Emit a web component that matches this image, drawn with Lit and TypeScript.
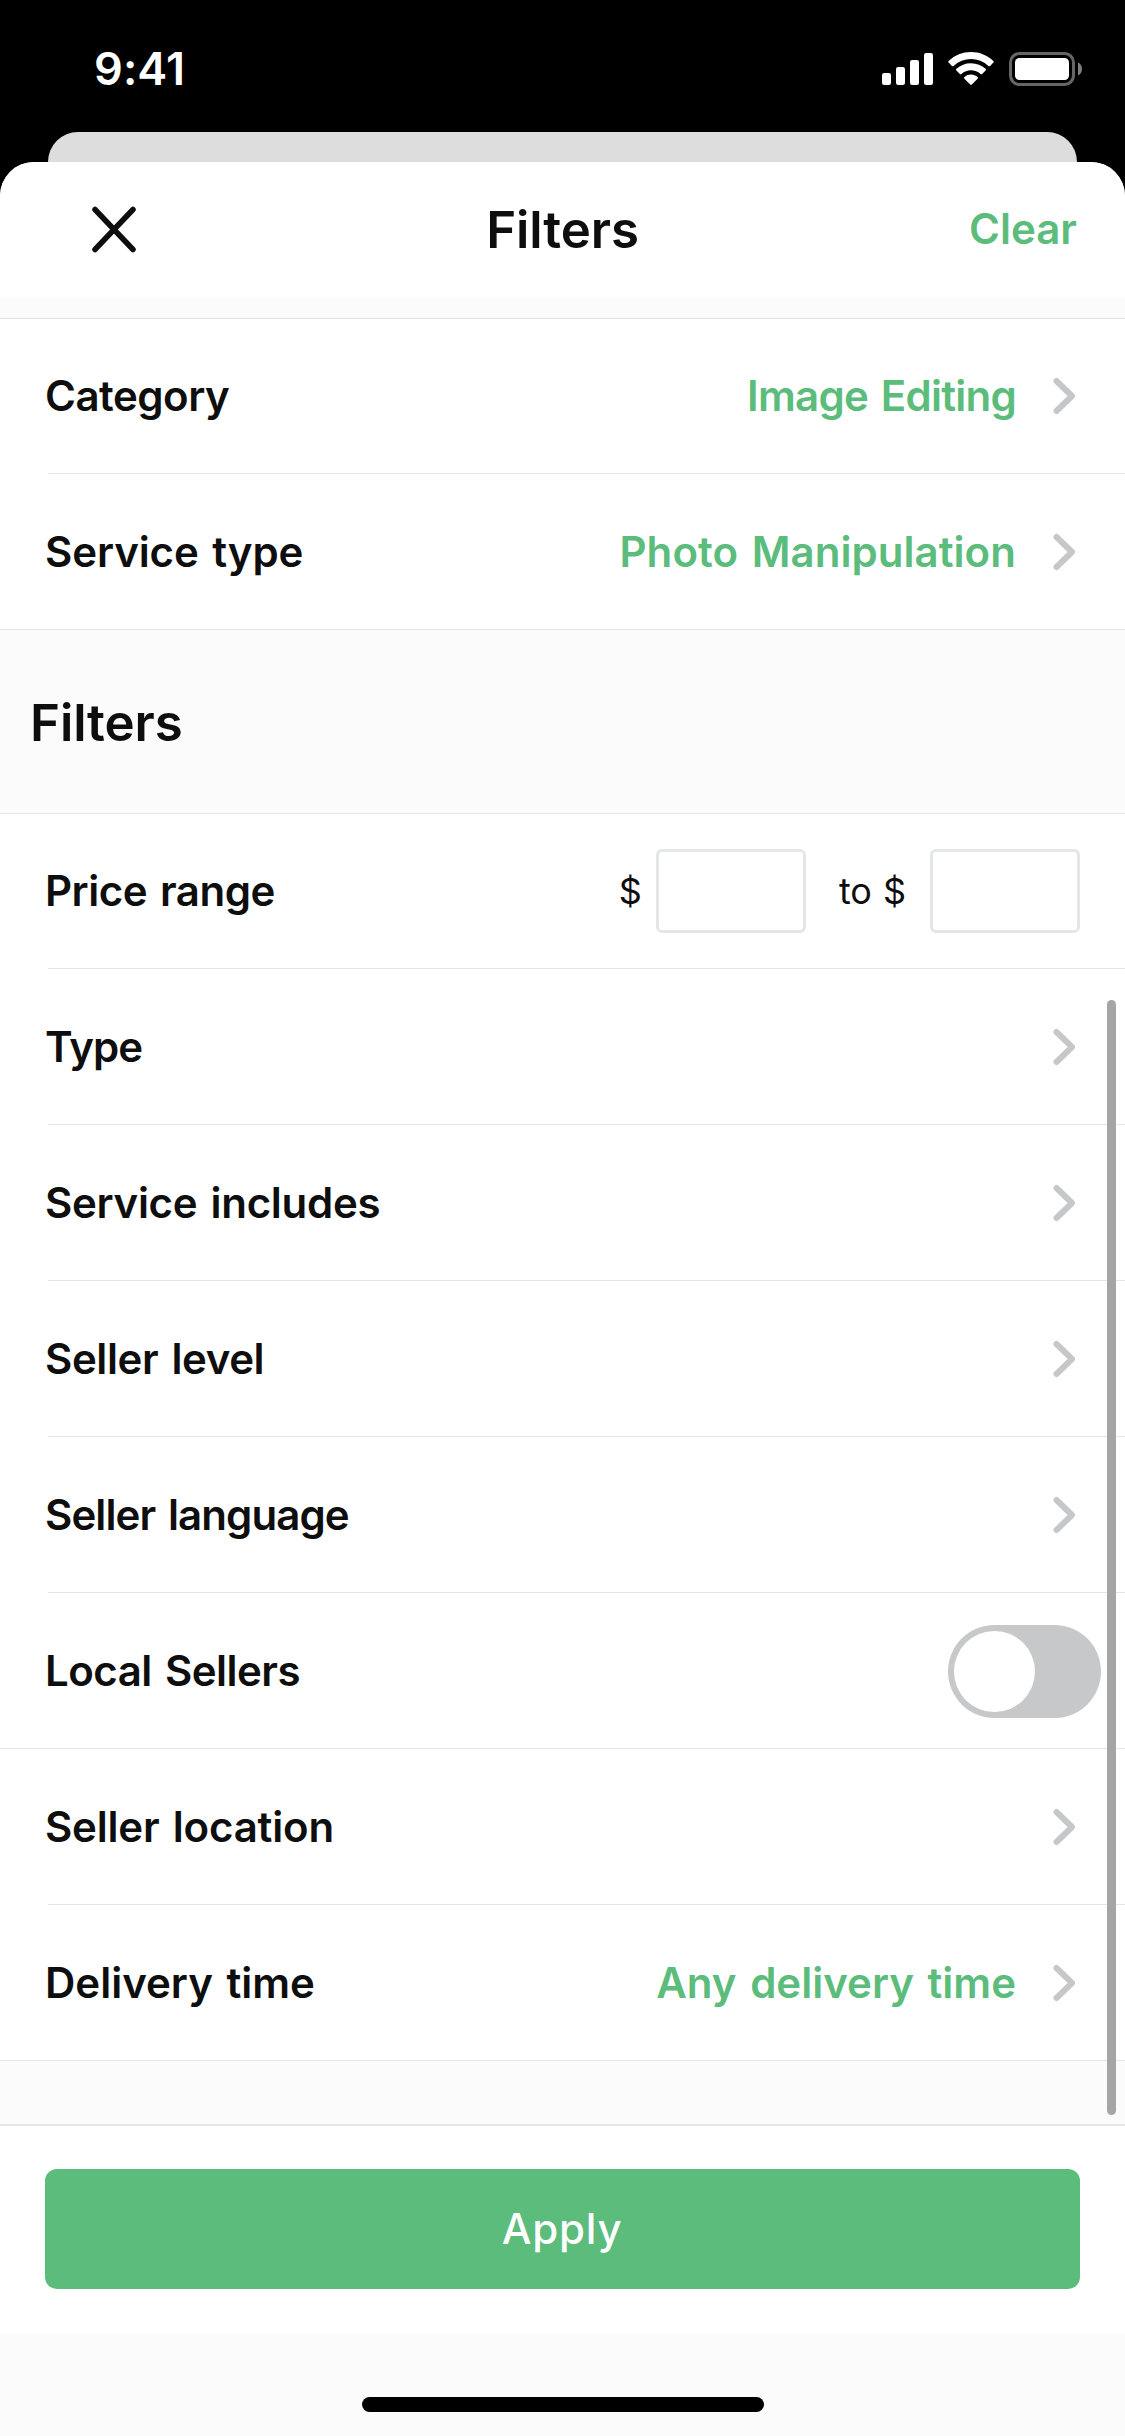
import { LitElement, html, css, nothing } from "lit";
import { customElement, property } from "lit/decorators.js";
import { classMap } from "lit/directives/class-map.js";
import { styleMap } from "lit/directives/style-map.js";

type Row = {
  label: string;
  kind: "link" | "price" | "toggle";
  value?: string;
  full?: boolean;
  /** Letter spacing of the label and of the value, in pixels. */
  tracking?: number;
  valueTracking?: number;
};

const SCOPE_ROWS: Row[] = [
  { label: "Category", kind: "link", value: "Image Editing", tracking: -0.5, valueTracking: -0.75 },
  { label: "Service type", kind: "link", value: "Photo Manipulation", full: true, tracking: -0.1, valueTracking: 0.05 },
];

const FILTER_ROWS: Row[] = [
  { label: "Price range", kind: "price", tracking: -0.5 },
  { label: "Type", kind: "link", tracking: -0.9 },
  { label: "Service includes", kind: "link", tracking: -0.3 },
  { label: "Seller level", kind: "link", tracking: -0.4 },
  { label: "Seller language", kind: "link", tracking: -0.9 },
  { label: "Local Sellers", kind: "toggle", full: true, tracking: -0.5 },
  { label: "Seller location", kind: "link", tracking: -0.2 },
  { label: "Delivery time", kind: "link", value: "Any delivery time", full: true, tracking: 0, valueTracking: 0 },
];

@customElement("status-bar")
class StatusBar extends LitElement {
  static styles = css`
    :host {
      display: flex;
      justify-content: space-between;
      align-items: flex-start;
      height: 132px;
      box-sizing: border-box;
      padding: 46px 43px 0 94px;
      background: #000;
      color: #fff;
    }
    .time {
      font-size: 45px;
      font-weight: 600;
      line-height: 46px;
      letter-spacing: 0.1px;
    }
    .icons {
      display: block;
      width: 200px;
      height: 34px;
      margin-top: 6px;
    }
  `;
  render() {
    return html`
      <span class="time">9:41</span>
      <svg class="icons" viewBox="882 52 200 34" fill="#fff">
        <rect x="882" y="73" width="9" height="12" rx="2.2" />
        <rect x="896" y="67" width="9" height="18" rx="2.2" />
        <rect x="910" y="60" width="9" height="25" rx="2.2" />
        <rect x="924" y="53" width="9" height="32" rx="2.2" />
        <path d="M971 52c8.700 0 16.600 3.400 22.400 8.900.5.5.5 1.200 0 1.700l-3.300 3.300c-.5.5-1.200.5-1.700 0a25.200 25.200 0 0 0-34.800 0c-.5.5-1.200.5-1.700 0l-3.300-3.300c-.5-.5-.5-1.200 0-1.700A32.400 32.400 0 0 1 971 52z" />
        <path d="M971 63.200c5.600 0 10.700 2.100 14.600 5.600.5.5.5 1.200 0 1.700l-3.500 3.500c-.5.400-1.100.4-1.600 0a14.100 14.100 0 0 0-19 0c-.5.4-1.100.4-1.600 0l-3.500-3.500c-.5-.5-.5-1.200 0-1.700A21.700 21.700 0 0 1 971 63.200z" />
        <path d="M971 74.600c2.500 0 4.800.9 6.600 2.400.5.4.5 1.200 0 1.700l-5.800 5.900c-.4.400-1.200.4-1.600 0l-5.800-5.900c-.5-.5-.5-1.300 0-1.700a10.300 10.300 0 0 1 6.600-2.400z" />
        <rect x="1010.500" y="53.500" width="63" height="31" rx="9" fill="none" stroke="#666" stroke-width="3" />
        <rect x="1015" y="58" width="54" height="22" rx="4.500" />
        <path d="M1078 62.500c2.400 1 4 3.500 4 6.500s-1.600 5.500-4 6.500z" fill="#808080" />
      </svg>
    `;
  }
}

@customElement("filter-row")
class FilterRow extends LitElement {
  @property({ attribute: false }) row!: Row;

  static styles = css`
    :host {
      display: block;
      background: #fff;
      padding-left: 48px;
    }
    :host([full]) {
      padding-left: 0;
    }
    .row {
      display: flex;
      align-items: center;
      justify-content: space-between;
      box-sizing: border-box;
      height: var(--row-height, 156px);
      padding-right: 45px;
      border-bottom: 1px solid #e4e5e6;
      font-size: 42px;
      font-weight: 600;
      line-height: 52px;
      word-spacing: 3px;
      color: #0e0e0f;
      white-space: nowrap;
    }
    .full {
      padding-left: 48px;
    }
    .toggle-row {
      padding-right: 24px;
    }
    .label {
      margin-left: -3px;
    }
    .end {
      display: flex;
      align-items: center;
    }
    .value {
      color: #5bbc7b;
      margin-right: 34px;
    }
    .chevron {
      display: block;
      width: 30px;
      height: 40px;
    }
    .price {
      font-size: 36px;
      font-weight: 400;
    }
    .field {
      width: 150px;
      height: 84px;
      box-sizing: border-box;
      border: 3px solid #e5e6e7;
      border-radius: 6px;
      margin-left: 14px;
    }
    .to {
      margin: 0 11px 0 33px;
    }
    .last {
      margin-left: 24px;
    }
    .toggle {
      width: 153px;
      height: 93px;
      border-radius: 47px;
      background: #c7c8ca;
      box-sizing: border-box;
      padding: 6px;
      margin-top: 2px;
    }
    .knob {
      width: 81px;
      height: 81px;
      border-radius: 50%;
      background: #fff;
    }
  `;

  private spacing(px = 0) {
    return styleMap({ letterSpacing: `${px}px` });
  }

  private renderEnd() {
    const { kind, value, valueTracking } = this.row;
    if (kind === "toggle") {
      return html`<div class="toggle"><div class="knob"></div></div>`;
    }
    if (kind === "price") {
      return html`<div class="end price">
        <span>$</span>
        <div class="field"></div>
        <span class="to">to</span>
        <span>$</span>
        <div class="field last"></div>
      </div>`;
    }
    return html`<div class="end">
      ${value ? html`<span class="value" style=${this.spacing(valueTracking)}>${value}</span>` : nothing}
      <svg class="chevron" viewBox="0 0 30 40" fill="none" stroke="#c6c7c9" stroke-width="6" stroke-linecap="round" stroke-linejoin="round">
        <path d="M6.500 5 L22 20 L6.500 35" />
      </svg>
    </div>`;
  }

  render() {
    const { label, full, kind, tracking } = this.row;
    return html`<div class=${classMap({ row: true, full: !!full, "toggle-row": kind === "toggle" })}>
      <span class="label" style=${this.spacing(tracking)}>${label}</span>
      ${this.renderEnd()}
    </div>`;
  }
}

@customElement("app-root")
class AppRoot extends LitElement {
  static styles = css`
    :host {
      display: block;
      width: 1125px;
      height: 2436px;
      overflow: hidden;
      background: #000;
      color: #0e0e0f;
      font-family: Inter, "Liberation Sans", sans-serif;
    }
    .screen {
      display: flex;
      flex-direction: column;
      height: 2436px;
    }
    .behind {
      height: 30px;
      margin: 0 48px;
      background: #ddd;
      border-radius: 30px 30px 0 0;
    }
    .sheet {
      flex: 1;
      display: flex;
      flex-direction: column;
      background: #fbfbfb;
      border-radius: 34px 34px 0 0;
      overflow: hidden;
    }
    .header {
      display: grid;
      grid-template-columns: 1fr auto 1fr;
      align-items: center;
      height: 135px;
      padding: 0 48px 0 92px;
      background: #fff;
    }
    .close {
      display: block;
      width: 44px;
      height: 47px;
    }
    .title {
      font-size: 51px;
      font-weight: 600;
      letter-spacing: -0.1px;
      margin-left: -44px;
    }
    .clear {
      justify-self: end;
      font-size: 42px;
      font-weight: 600;
      line-height: 50px;
      margin-bottom: 1px;
      letter-spacing: 0;
      color: #5bbc7b;
    }
    .list {
      position: relative;
      padding-top: 21px;
      height: 1827px;
      box-sizing: border-box;
    }
    .group {
      border-top: 1px solid #e4e5e6;
    }
    .first {
      --row-height: 155px;
    }
    .heading {
      display: flex;
      align-items: center;
      height: 183px;
      padding: 1px 0 0 30px;
      box-sizing: border-box;
      font-size: 51px;
      font-weight: 600;
      letter-spacing: -0.1px;
    }
    .scrollbar {
      position: absolute;
      top: 703px;
      right: 9px;
      width: 9px;
      height: 1115px;
      border-radius: 5px;
      background: #a5a5a5;
    }
    .footer {
      height: 210px;
      box-sizing: border-box;
      padding: 43px 45px 0;
      border-top: 2px solid #e6e6e6;
      background: #fff;
    }
    .apply {
      display: flex;
      align-items: center;
      justify-content: center;
      height: 120px;
      border-radius: 12px;
      background: #5bbc7b;
      color: #fff;
      font-size: 42px;
      font-weight: 500;
      line-height: 50px;
      letter-spacing: 0.8px;
      text-indent: -1px;
    }
    .home {
      flex: 1;
      display: flex;
      justify-content: center;
      padding-top: 63px;
    }
    .indicator {
      width: 402px;
      height: 15px;
      border-radius: 8px;
      background: #000;
    }
  `;

  private renderRow(row: Row, first = false) {
    return html`<filter-row class=${classMap({ first })} ?full=${!!row.full} .row=${row}></filter-row>`;
  }

  render() {
    return html`
      <div class="screen">
        <status-bar></status-bar>
        <div class="behind"></div>
        <div class="sheet">
          <div class="header">
            <svg class="close" viewBox="0 0 44 47" fill="none" stroke="#0e0e0f" stroke-width="5.500" stroke-linecap="round">
              <path d="M3 3.500 L41 43.500 M41 3.500 L3 43.500" />
            </svg>
            <span class="title">Filters</span>
            <span class="clear">Clear</span>
          </div>
          <div class="list">
            <div class="group">${SCOPE_ROWS.map((r, i) => this.renderRow(r, i === 0))}</div>
            <div class="heading">Filters</div>
            <div class="group">${FILTER_ROWS.map((r, i) => this.renderRow(r, i === 0))}</div>
            <div class="scrollbar"></div>
          </div>
          <div class="footer"><div class="apply">Apply</div></div>
          <div class="home"><div class="indicator"></div></div>
        </div>
      </div>
    `;
  }
}
